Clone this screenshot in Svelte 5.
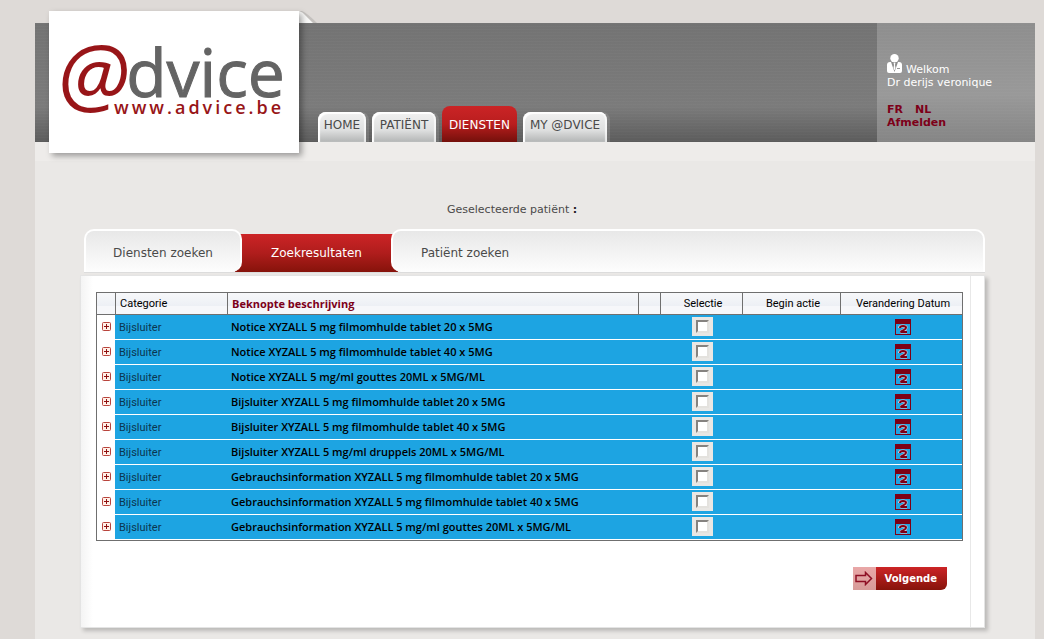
<script lang="ts">
  type Row = { id: number; category: string; description: string };

  const menu = [
    { label: "HOME", width: 48 },
    { label: "PATIËNT", width: 64 },
    { label: "DIENSTEN", width: 75 },
    { label: "MY @DVICE", width: 84 },
  ];
  const tabs = ["Diensten zoeken", "Zoekresultaten", "Patiënt zoeken"];

  const rows: Row[] = [
    "Notice XYZALL 5 mg filmomhulde tablet 20 x 5MG",
    "Notice XYZALL 5 mg filmomhulde tablet 40 x 5MG",
    "Notice XYZALL 5 mg/ml gouttes 20ML x 5MG/ML",
    "Bijsluiter XYZALL 5 mg filmomhulde tablet 20 x 5MG",
    "Bijsluiter XYZALL 5 mg filmomhulde tablet 40 x 5MG",
    "Bijsluiter XYZALL 5 mg/ml druppels 20ML x 5MG/ML",
    "Gebrauchsinformation XYZALL 5 mg filmomhulde tablet 20 x 5MG",
    "Gebrauchsinformation XYZALL 5 mg filmomhulde tablet 40 x 5MG",
    "Gebrauchsinformation XYZALL 5 mg/ml gouttes 20ML x 5MG/ML",
  ].map((description, id) => ({ id, category: "Bijsluiter", description }));

  let activeMenu = $state("DIENSTEN");
  let activeTab = $state("Zoekresultaten");
  let selected: number[] = $state([]);
</script>

<div class="page">
  <header>
    <a class="logo" href="#home" aria-label="@dvice">
      <span class="wordmark"><span class="at">@</span><span class="name">dvice</span></span>
      <span class="url">www.advice.be</span>
    </a>
    <svg class="fold" width="18" height="12" viewBox="0 0 18 12">
      <path d="M0 0H3Q8 2 18 12H0Z" fill="#c4c1be" />
      <path d="M0 0Q4 1 7 5L14 12H0Z" fill="#f9f9f8" />
    </svg>

    <nav>
      {#each menu as item}
        <a
          href="#menu"
          class="menu-item"
          class:active={item.label === activeMenu}
          style:width="{item.width}px"
          onclick={() => (activeMenu = item.label)}>{item.label}</a
        >
      {/each}
    </nav>

    <div class="user">
      <div class="welcome">
        <svg width="15" height="19" viewBox="0 0 15 19">
          <circle cx="7.5" cy="4.3" r="4.2" fill="#fff" />
          <path d="M0 11Q0 8 3 8H12Q15 8 15 11V17Q15 19 13 19H2Q0 19 0 17Z" fill="#fff" />
          <path d="M4 8L7.500 18L11 8Z" fill="#8c8c8c" />
          <path d="M6.500 8.500H8.500L8 11L8.500 14L7.500 16.500L6.500 14L7 11Z" fill="#fff" />
          <path d="M10 14.500H13" stroke="#999" />
        </svg>
        <span>Welkom</span>
      </div>
      <div>Dr derijs veronique</div>
      <div class="langs">
        <a href="#fr">FR</a>
        <a href="#nl">NL</a>
      </div>
      <a href="#logout">Afmelden</a>
    </div>
  </header>

  <main>
    <p class="patient">Geselecteerde patiënt <b>:</b></p>

    <div class="box">
      <div class="tabs">
        {#each tabs as tab}
          <button
            class="tab"
            class:active={tab === activeTab}
            onclick={() => (activeTab = tab)}>{tab}</button
          >
        {/each}
      </div>

      <section class="panel">
        <div class="content">
          <table>
            <thead>
              <tr>
                <th class="expand"></th>
                <th class="category">Categorie</th>
                <th class="description">Beknopte beschrijving</th>
                <th class="info"></th>
                <th class="selection">Selectie</th>
                <th class="start">Begin actie</th>
                <th class="changed">Verandering Datum</th>
              </tr>
            </thead>
            <tbody>
              {#each rows as row (row.id)}
                <tr>
                  <td class="expand">
                    <button aria-label="Openen">
                      <svg width="9" height="9" viewBox="0 0 9 9">
                        <rect x="0.5" y="0.5" width="8" height="8" rx="1" fill="#fff0e8" stroke="#b8443c" />
                        <path d="M2 4.500H7M4.500 2V7" stroke="#8e1010" />
                      </svg>
                    </button>
                  </td>
                  <td class="category">{row.category}</td>
                  <td class="description">{row.description}</td>
                  <td></td>
                  <td class="selection">
                    <label>
                      <input
                        type="checkbox"
                        value={row.id}
                        bind:group={selected}
                        aria-label={row.description}
                      />
                    </label>
                  </td>
                  <td></td>
                  <td class="changed">
                    <button aria-label="Datum kiezen">
                      <svg width="16" height="16" viewBox="0 0 16 16">
                        <rect x="0.5" y="0.5" width="15" height="15" fill="none" stroke="#7d0015" />
                        <path d="M4.500 9Q4.500 7 8 7T11 8.800Q11 10 5.500 13H12" fill="none" stroke="#e8c6d2" stroke-width="3" />
                        <path d="M0 0H16V5H0Z" fill="#7d0015" />
                        <path d="M5 9Q5 7 8 7T11 8.800Q11 10 5.500 13H12" fill="none" stroke="#7d0015" stroke-width="2" />
                      </svg>
                    </button>
                  </td>
                </tr>
              {/each}
            </tbody>
          </table>

          <div class="actions">
            <button class="next">
              <span class="arrow">
                <svg width="18" height="15" viewBox="0 0 18 15">
                  <path d="M1 4.500H10.500V1.500L16.500 7.500L10.500 13.500V10.500H1Z" fill="none" stroke="#8e0f24" stroke-width="1.500" />
                </svg>
              </span>
              <span class="label">Volgende</span>
            </button>
          </div>
        </div>
      </section>
    </div>
  </main>
</div>

<style>
  :global(body) {
    margin: 0;
    background: #dedad7;
  }

  .page {
    box-sizing: border-box;
    min-height: 100vh;
    margin: 0 9px 0 35px;
    padding-top: 23px;
    background: linear-gradient(#dedad7 23px, #eeecea 23px, #eeecea 161px, #eae8e6 161px);
    color: #4a4a4a;
    font-family: Verdana, "DejaVu Sans", sans-serif;
    font-size: 11px;
  }

  a {
    text-decoration: none;
  }

  button {
    padding: 0;
    border: 0;
    background: none;
    font: inherit;
    cursor: pointer;
  }

  header {
    position: relative;
    display: flex;
    align-items: stretch;
    justify-content: space-between;
    height: 119px;
    padding-left: 283px;
    background: repeating-linear-gradient(rgba(255, 255, 255, 0.02) 0 1px, transparent 1px 3px),
      linear-gradient(#737373, #7b7b7b 70%, #5c5c5c);
  }

  /* the logo card hangs over both edges of the header */
  .logo {
    position: absolute;
    z-index: 1;
    top: -12px;
    left: 14px;
    box-sizing: border-box;
    width: 250px;
    height: 142px;
    padding: 22px 0 0 9px;
    background: #fff;
    box-shadow: 3px 3px 6px rgba(0, 0, 0, 0.35);
    font-family: "Open Sans", "Noto Sans", sans-serif;
    font-weight: 500;
  }

  .wordmark {
    display: flex;
    align-items: flex-start;
  }

  .at {
    color: #981518;
    font-size: 84px;
    font-style: italic;
    line-height: 80px;
  }

  .name {
    color: #646464;
    font-size: 66px;
    line-height: 76px;
    margin-left: -3px;
    -webkit-text-stroke: 1px #646464;
  }

  .url {
    position: absolute;
    top: 84px;
    left: 65px;
    color: #981518;
    font-size: 18px;
    font-weight: 600;
    line-height: 24px;
    letter-spacing: 3px;
  }

  .fold {
    position: absolute;
    top: -12px;
    left: 264px;
  }

  nav {
    display: flex;
    align-items: flex-end;
    gap: 6px;
  }

  .menu-item {
    height: 30px;
    border-radius: 8px 8px 0 0;
    background: linear-gradient(#f1f1f1, #dfe0e0 60%, #b3b5b5);
    box-shadow:
      inset 2px 2px 1px #fff,
      inset -2px 0 1px rgba(255, 255, 255, 0.7),
      3px 0 0 rgba(255, 255, 255, 0.12);
    color: #4a4a4a;
    font-size: 12px;
    line-height: 26px;
    text-align: center;
    white-space: nowrap;
  }

  .menu-item.active {
    height: 36px;
    background: linear-gradient(#cb2426, #b91e1e 50%, #74100b);
    box-shadow: none;
    color: #fff;
    line-height: 38px;
  }

  .user {
    box-sizing: border-box;
    width: 158px;
    padding: 31px 10px 0;
    background: repeating-linear-gradient(rgba(255, 255, 255, 0.02) 0 1px, transparent 1px 3px),
      linear-gradient(#8e8e8e, #999 60%, #858585);
    color: #fff;
    line-height: 13px;
  }

  .user a {
    color: #7d0019;
    font-weight: bold;
  }

  .welcome {
    display: flex;
    align-items: flex-end;
    gap: 4px;
    height: 22px;
  }

  .welcome svg {
    margin-bottom: 3px;
  }

  .langs {
    display: flex;
    gap: 12px;
    margin-top: 14px;
  }

  main {
    padding: 61px 50px 12px 45px;
  }

  .patient {
    margin: 0;
    padding-left: 367px;
    line-height: 14px;
  }

  .patient b {
    color: #222;
  }

  .box {
    margin-top: 12px;
  }

  .tabs {
    display: flex;
    height: 43px;
    margin-left: 4px;
    border-bottom: 1px solid #dcdcdc;
  }

  .tab {
    position: relative;
    z-index: 1;
    box-sizing: border-box;
    width: 158px;
    border: 2px solid #fff;
    border-bottom: 0;
    border-radius: 10px 10px 10px 0;
    background: linear-gradient(#e8e8e8, #fdfdfd);
    color: #4a4a4a;
    font-size: 12px;
    line-height: 14px;
    padding-top: 2px;
  }

  .tab:last-child {
    flex: 1;
    padding-left: 28px;
    border-radius: 10px 10px 0 10px;
    text-align: left;
  }

  .tab.active {
    z-index: 0;
    width: 163px;
    margin: 5px -7px 0;
    padding-top: 0;
    border: 0;
    border-radius: 0;
    background: linear-gradient(#cc2426, #b01d1c 50%, #86130b);
    color: #fff;
  }

  .panel {
    margin-top: 2px;
    padding: 0 13px 0 12px;
    border: 1px solid #e4e4e4;
    background: linear-gradient(90deg, #f4f4f4, #fff 12px);
    box-shadow: 3px 3px 4px rgba(0, 0, 0, 0.2);
  }

  .content {
    padding: 16px 7px 37px 3px;
    border-right: 1px solid #e8e8e8;
    background: #fff;
  }

  table {
    width: 100%;
    border: 1px solid #6f6f6f;
    border-spacing: 0;
    table-layout: fixed;
    color: #000;
    font-family: Roboto, "Open Sans", sans-serif;
    font-size: 11px;
    line-height: 14px;
  }

  th,
  td {
    box-sizing: border-box;
    padding: 0;
    overflow: hidden;
    white-space: nowrap;
  }

  th {
    height: 22px;
    border-bottom: 1px solid #6f6f6f;
    border-left: 1px solid #6f6f6f;
    background: linear-gradient(#f7f8fa, #edf0f5 60%, #f6f7fa 62%);
    font-weight: normal;
  }

  th:first-child {
    border-left: 0;
  }

  td {
    height: 25px;
    border-bottom: 1px solid #fff;
    background: #1da4e2;
  }

  .expand {
    width: 18px;
  }

  td.expand {
    padding: 0 0 1px 1px;
    background: #fff;
  }

  .category {
    width: 112px;
    padding-left: 4px;
    text-align: left;
  }

  td.category {
    padding-top: 2px;
    color: #0b3550;
  }

  .description {
    padding-left: 4px;
    font-family: "Open Sans", "Noto Sans", sans-serif;
    font-weight: 600;
    text-align: left;
  }

  th.description {
    color: #7d0019;
    font-weight: bold;
  }

  .info {
    width: 22px;
  }

  .selection {
    width: 82px;
    padding-left: 3px;
    text-align: center;
  }

  td.selection {
    padding-bottom: 1px;
  }

  .start {
    width: 98px;
    padding-left: 3px;
  }

  .changed {
    width: 122px;
    padding-left: 3px;
    text-align: center;
  }

  td button {
    display: block;
    margin: 0 auto;
  }

  td svg {
    display: block;
  }

  label {
    display: flex;
    align-items: center;
    justify-content: center;
    width: 21px;
    height: 19px;
    margin: 0 auto;
    background: #e9e7e4;
  }

  input {
    box-sizing: border-box;
    width: 13px;
    height: 13px;
    margin: 0;
    appearance: none;
    border: 2px solid;
    border-color: #85827f #e4e2de #e4e2de #85827f;
    background: #fff;
  }

  input:checked {
    background: #7d0019;
  }

  .actions {
    display: flex;
    justify-content: flex-end;
    padding: 26px 16px 0 0;
  }

  .next {
    display: flex;
    height: 23px;
    border-radius: 0 0 6px 0;
    overflow: hidden;
    color: #fff;
    font-size: 10px;
    font-weight: bold;
    line-height: 23px;
  }

  .arrow {
    display: flex;
    align-items: center;
    justify-content: center;
    width: 23px;
    height: 23px;
    background: linear-gradient(#e9a7a7, #d79c99);
  }

  .label {
    padding: 0 10px 0 9px;
    background: linear-gradient(#cc2426, #86130b);
  }
</style>
